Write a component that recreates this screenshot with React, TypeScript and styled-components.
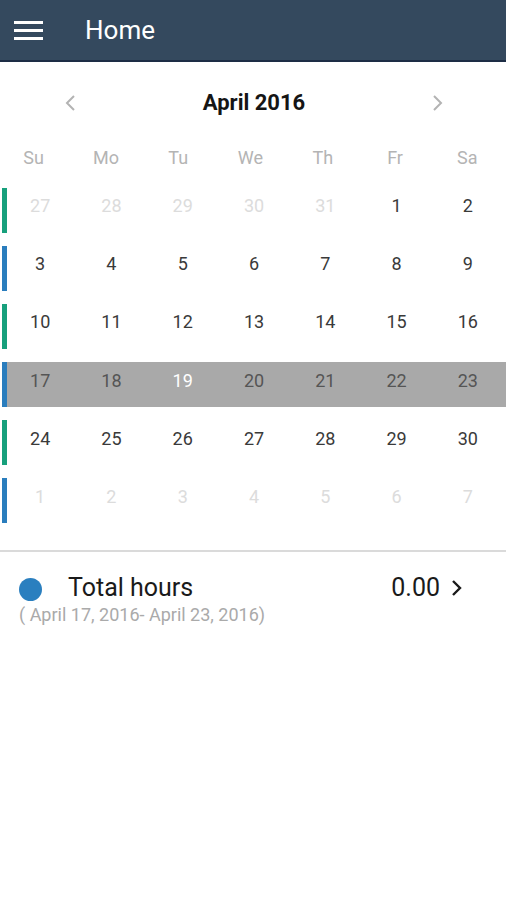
import React from "react";
import styled, { createGlobalStyle } from "styled-components";

const GlobalStyle = createGlobalStyle`
  html, body {
    margin: 0;
    padding: 0;
    background: #ffffff;
    font-family: Roboto, "Noto Sans", "Liberation Sans", sans-serif;
  }
  * { box-sizing: border-box; }
`;

const Page = styled.div`
  width: 506px;
  min-height: 900px;
  background: #ffffff;
`;

const Toolbar = styled.header`
  height: 62px;
  background: #34495e;
  border-bottom: 2px solid #1d2d45;
  display: flex;
  align-items: center;
  padding-left: 14px;
`;

const MenuButton = styled.div`
  width: 29px;
  display: flex;
  flex-direction: column;
  gap: 5px;
  margin-right: 42px;
  margin-top: 1px;

  span {
    display: block;
    height: 3px;
    background: #ffffff;
  }
`;

const Title = styled.h1`
  margin: 0;
  font-size: 26px;
  font-weight: 400;
  color: #ffffff;
  padding-bottom: 1px;
`;

const MonthNav = styled.div`
  height: 78px;
  display: flex;
  align-items: center;
  justify-content: space-between;
  padding: 3px 62px 0 64px;
`;

const MonthLabel = styled.div`
  font-size: 22px;
  font-weight: 700;
  color: #151515;
`;

const Arrow = styled.svg`
  width: 12px;
  height: 18px;
  display: block;
`;

const WeekHeader = styled.div`
  display: grid;
  grid-template-columns: repeat(7, 1fr);
  height: 34px;
  align-items: center;
`;

const WeekDay = styled.div`
  text-align: center;
  font-size: 18px;
  color: #b4b4b4;
  padding-right: 5px;
`;

const Weeks = styled.div`
  margin-top: 14px;
  display: flex;
  flex-direction: column;
  gap: 13.6px;
`;

const WeekRow = styled.div`
  display: flex;
  height: 44.5px;
`;

const WeekMark = styled.div<{ $color: string }>`
  width: 5px;
  margin-left: 2px;
  background: ${(p) => p.$color};
`;

const Days = styled.div<{ $selected?: boolean }>`
  flex: 1;
  display: grid;
  grid-template-columns: repeat(7, 1fr);
  align-items: center;
  padding-bottom: 9px;
  background: ${(p) => (p.$selected ? "#a9a9a9" : "transparent")};
`;

const Day = styled.div<{ $tone: "muted" | "normal" | "selrow" | "today" }>`
  text-align: center;
  font-size: 18px;
  padding-right: 5px;
  color: ${(p) =>
    p.$tone === "muted"
      ? "#dcdcdc"
      : p.$tone === "selrow"
      ? "#555555"
      : p.$tone === "today"
      ? "#ffffff"
      : "#3a3a3a"};
`;

const Divider = styled.div`
  margin-top: 27px;
  height: 2px;
  background: #dadada;
`;

const Summary = styled.div`
  padding: 20px 0 0 19px;
`;

const SummaryRow = styled.div`
  display: flex;
  align-items: center;
  height: 32px;
`;

const Dot = styled.div`
  width: 23px;
  height: 23px;
  border-radius: 50%;
  background: #2a7fbf;
  margin-top: 4px;
  margin-right: 26px;
`;

const SummaryLabel = styled.div`
  flex: 1;
  font-size: 25px;
  color: #1a1a1a;
`;

const SummaryValue = styled.div`
  font-size: 25px;
  color: #1a1a1a;
  margin-right: 10px;
`;

const Chevron = styled.svg`
  width: 14px;
  height: 20px;
  display: block;
  margin-right: 42px;
`;

const Range = styled.div`
  font-size: 18px;
  color: #aaaaaa;
  margin-top: 0;
`;

const weekdays = ["Su", "Mo", "Tu", "We", "Th", "Fr", "Sa"];

type Cell = { d: number; muted?: boolean };

const weeks: { color: string; days: Cell[]; selected?: boolean }[] = [
  {
    color: "#17a07c",
    days: [
      { d: 27, muted: true },
      { d: 28, muted: true },
      { d: 29, muted: true },
      { d: 30, muted: true },
      { d: 31, muted: true },
      { d: 1 },
      { d: 2 },
    ],
  },
  { color: "#2a7dbd", days: [3, 4, 5, 6, 7, 8, 9].map((d) => ({ d })) },
  { color: "#17a07c", days: [10, 11, 12, 13, 14, 15, 16].map((d) => ({ d })) },
  {
    color: "#2a7dbd",
    selected: true,
    days: [17, 18, 19, 20, 21, 22, 23].map((d) => ({ d })),
  },
  { color: "#17a07c", days: [24, 25, 26, 27, 28, 29, 30].map((d) => ({ d })) },
  {
    color: "#2a7dbd",
    days: [1, 2, 3, 4, 5, 6, 7].map((d) => ({ d, muted: true })),
  },
];

export default function App() {
  return (
    <Page>
      <GlobalStyle />
      <Toolbar>
        <MenuButton>
          <span />
          <span />
          <span />
        </MenuButton>
        <Title>Home</Title>
      </Toolbar>

      <MonthNav>
        <Arrow viewBox="0 0 12 18">
          <path d="M10 2 L3 9 L10 16" fill="none" stroke="#b3b3b3" strokeWidth="2" />
        </Arrow>
        <MonthLabel>April 2016</MonthLabel>
        <Arrow viewBox="0 0 12 18">
          <path d="M2 2 L9 9 L2 16" fill="none" stroke="#b3b3b3" strokeWidth="2" />
        </Arrow>
      </MonthNav>

      <WeekHeader>
        {weekdays.map((w) => (
          <WeekDay key={w}>{w}</WeekDay>
        ))}
      </WeekHeader>

      <Weeks>
        {weeks.map((week, i) => (
          <WeekRow key={i}>
            <WeekMark $color={week.color} />
            <Days $selected={week.selected}>
              {week.days.map((c, j) => (
                <Day
                  key={j}
                  $tone={
                    c.muted
                      ? "muted"
                      : week.selected
                      ? c.d === 19
                        ? "today"
                        : "selrow"
                      : "normal"
                  }
                >
                  {c.d}
                </Day>
              ))}
            </Days>
          </WeekRow>
        ))}
      </Weeks>

      <Divider />

      <Summary>
        <SummaryRow>
          <Dot />
          <SummaryLabel>Total hours</SummaryLabel>
          <SummaryValue>0.00</SummaryValue>
          <Chevron viewBox="0 0 14 20">
            <path d="M3 3 L10 10 L3 17" fill="none" stroke="#1a1a1a" strokeWidth="2.4" />
          </Chevron>
        </SummaryRow>
        <Range>( April 17, 2016- April 23, 2016)</Range>
      </Summary>
    </Page>
  );
}
